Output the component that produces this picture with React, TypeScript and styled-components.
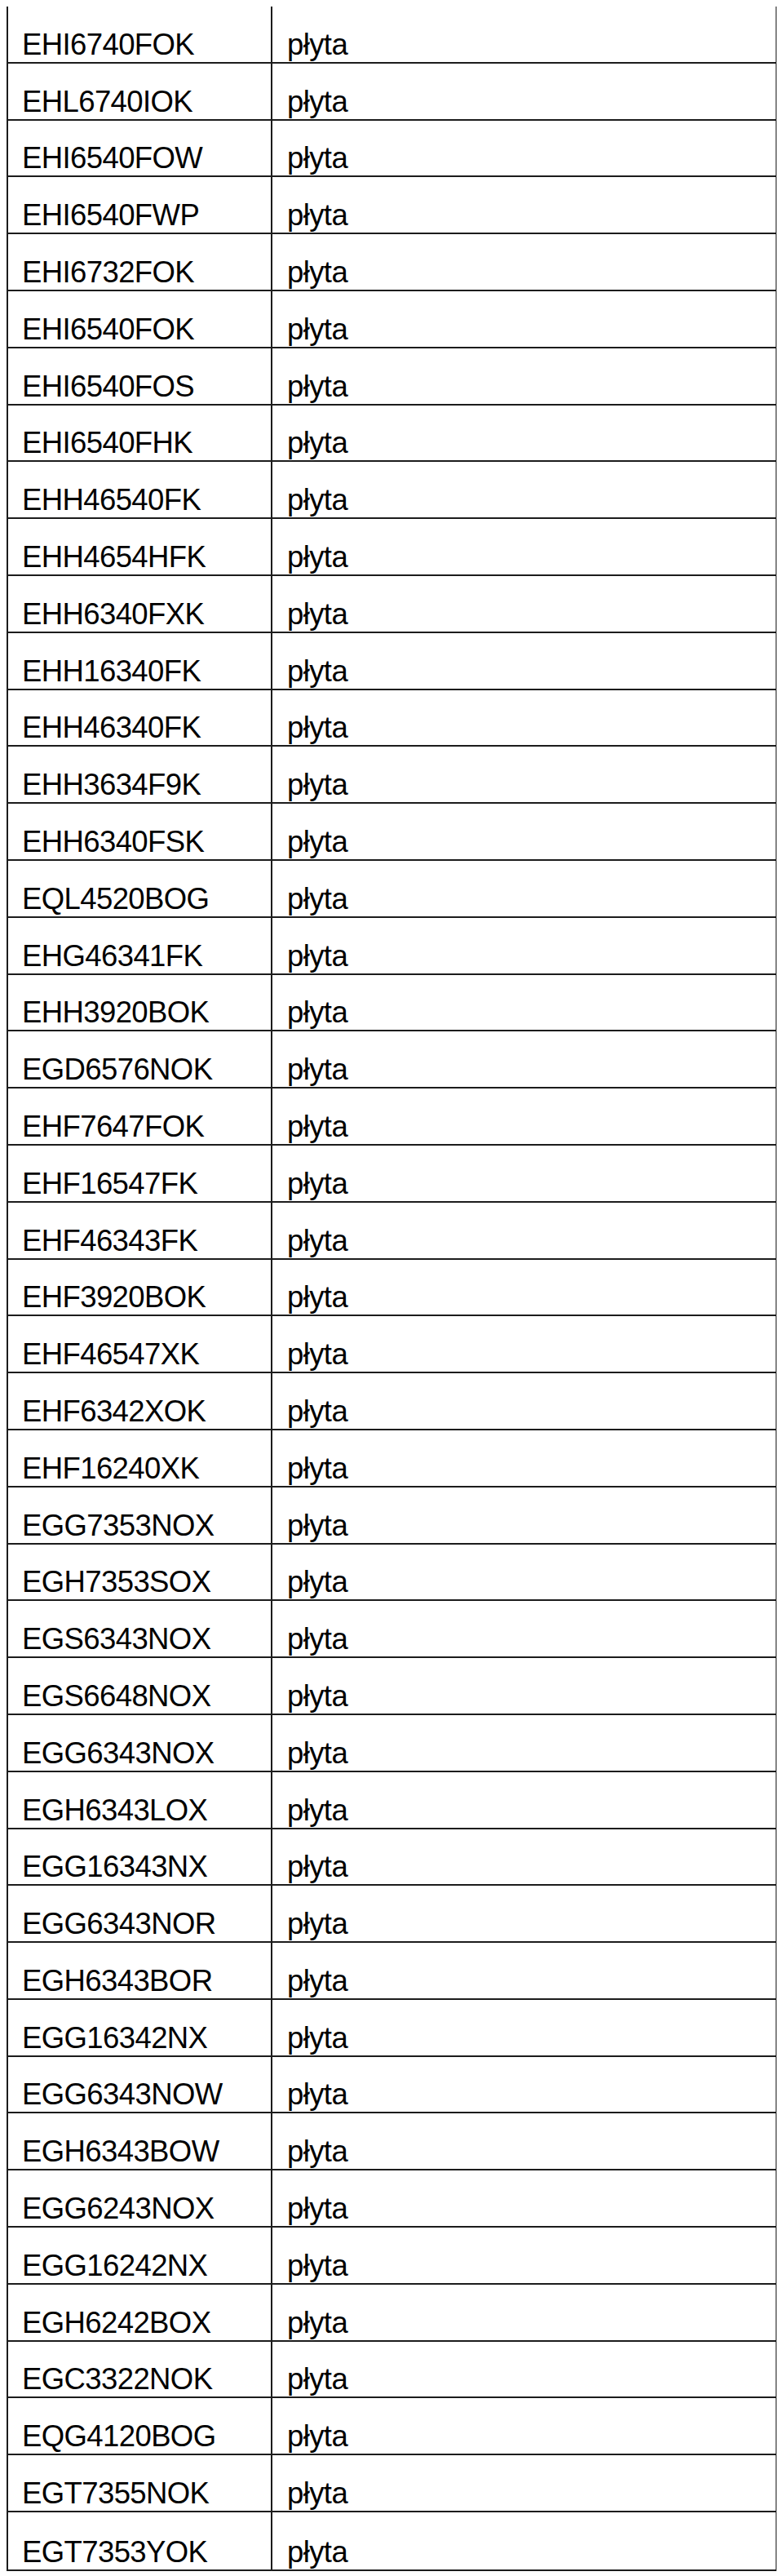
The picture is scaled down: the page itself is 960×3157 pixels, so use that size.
import React from "react"
import styled, { createGlobalStyle } from "styled-components"

const GlobalStyle = createGlobalStyle`
  body {
    background: #fff;
    margin: 8px;
  }
`

const models = [
  "EHI6740FOK",
  "EHL6740IOK",
  "EHI6540FOW",
  "EHI6540FWP",
  "EHI6732FOK",
  "EHI6540FOK",
  "EHI6540FOS",
  "EHI6540FHK",
  "EHH46540FK",
  "EHH4654HFK",
  "EHH6340FXK",
  "EHH16340FK",
  "EHH46340FK",
  "EHH3634F9K",
  "EHH6340FSK",
  "EQL4520BOG",
  "EHG46341FK",
  "EHH3920BOK",
  "EGD6576NOK",
  "EHF7647FOK",
  "EHF16547FK",
  "EHF46343FK",
  "EHF3920BOK",
  "EHF46547XK",
  "EHF6342XOK",
  "EHF16240XK",
  "EGG7353NOX",
  "EGH7353SOX",
  "EGS6343NOX",
  "EGS6648NOX",
  "EGG6343NOX",
  "EGH6343LOX",
  "EGG16343NX",
  "EGG6343NOR",
  "EGH6343BOR",
  "EGG16342NX",
  "EGG6343NOW",
  "EGH6343BOW",
  "EGG6243NOX",
  "EGG16242NX",
  "EGH6242BOX",
  "EGC3322NOK",
  "EQG4120BOG",
  "EGT7355NOK",
  "EGT7353YOK",
]

const Table = styled.div`
  border-bottom: 2px solid #1c1c1c;
  border-left: 2px solid #1c1c1c;
  border-right: 2px solid #1c1c1c;
  box-sizing: border-box;
  display: grid;
  grid-auto-rows: 69.8px;
  grid-template-columns: 324px 1fr;
  width: 945px;
`

const Cell = styled.div<{ $first?: boolean }>`
  align-items: flex-end;
  border-bottom: 2px solid #1c1c1c;
  border-right: ${({ $first }) => ($first ? "2px solid #1c1c1c" : "none")};
  box-sizing: border-box;
  color: #000;
  display: flex;
  font-family: "Liberation Sans", Arial, sans-serif;
  font-size: 36.5px;
  letter-spacing: -0.6px;
  line-height: normal;
  padding: 0 0 0 ${({ $first }) => ($first ? "17px" : "18px")};

  &:nth-last-child(-n + 2) {
    border-bottom: none;
  }
`

const App = () => (
  <>
    <GlobalStyle />
    <Table>
      {models.map(model => (
        <React.Fragment key={model}>
          <Cell $first>{model}</Cell>
          <Cell>płyta</Cell>
        </React.Fragment>
      ))}
    </Table>
  </>
)

export default App
